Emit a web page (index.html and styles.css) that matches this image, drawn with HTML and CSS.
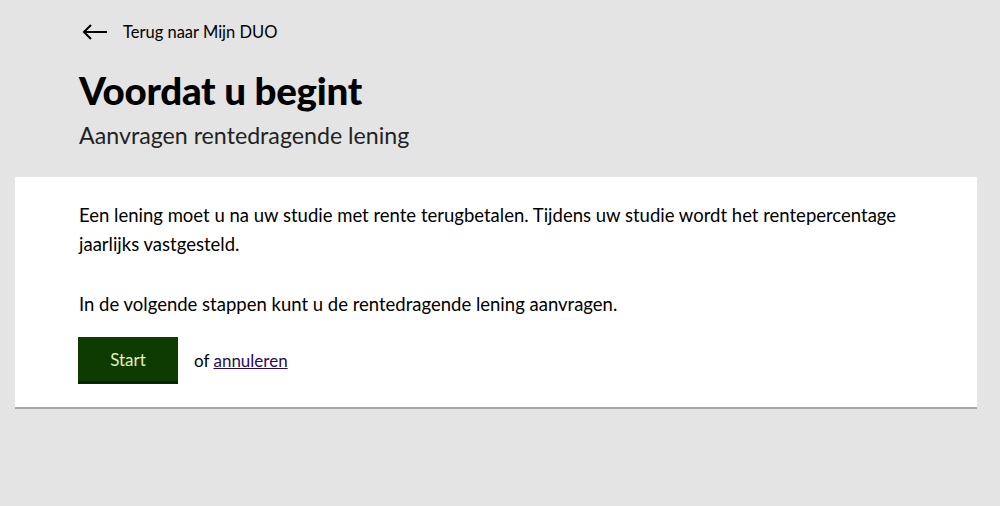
FILE: index.html
```html
<!DOCTYPE html>
<html lang="nl">
<head>
    <meta charset="UTF-8">
    <meta name="viewport" content="width=device-width, initial-scale=1.0">
    <title>Voordat u begint - Aanvragen rentedragende lening</title>
    <link rel="stylesheet" href="styles.css">
</head>
<body>
    <header class="top">
        <a class="back" href="#">
            <svg class="back-icon" width="26" height="16" viewBox="0 0 26 16" aria-hidden="true">
                <path d="M25 8H2M9 1L2 8l7 7" fill="none" stroke="#000" stroke-width="2"/>
            </svg>
            <span>Terug naar Mijn DUO</span>
        </a>
        <h1 class="title">Voordat u begint</h1>
        <p class="subtitle">Aanvragen rentedragende lening</p>
    </header>

    <main class="panel">
        <p>Een lening moet u na uw studie met rente terugbetalen. Tijdens uw studie wordt het rentepercentage jaarlijks vastgesteld.</p>
        <p>In de volgende stappen kunt u de rentedragende lening aanvragen.</p>
        <div class="actions">
            <button class="start" type="button">Start</button>
            <span class="cancel">of <a href="#">annuleren</a></span>
        </div>
    </main>
</body>
</html>
```

FILE: styles.css
```css
body {
    margin: 0;
    padding: 0;
    background-color: #e4e4e4;
    font-family: Lato, "Liberation Sans", sans-serif;
    color: #000;
}

.top {
    padding: 20px 0 0 79px;
}

.back {
    display: flex;
    align-items: center;
    gap: 15px;
    color: #000;
    text-decoration: none;
    font-size: 16.5px;
    padding-left: 3px;
    height: 24px;
}

.title {
    margin: 24px 0 0;
    font-size: 38.5px;
    font-weight: 900;
    line-height: 44px;
    letter-spacing: -0.3px;
}

.subtitle {
    margin: 8px 0 0;
    font-size: 23.2px;
    line-height: 30px;
    color: #222;
}

.panel {
    margin: 27px 23px 0 15px;
    padding: 24px 64px 23px 63px;
    background-color: #fff;
    border-bottom: 2px solid #a6a6a6;
}

.panel p {
    margin: 0 0 31px 1px;
    font-size: 18.5px;
    line-height: 29px;
}

.panel p + p {
    margin-bottom: 18px;
}

.actions {
    display: flex;
    align-items: center;
    gap: 16px;
}

.start {
    width: 100px;
    height: 47px;
    background-color: #0d3b00;
    color: #e6efb4;
    border: none;
    border-bottom: 3px solid #062600;
    font-family: inherit;
    font-size: 17px;
    cursor: pointer;
}

.cancel {
    font-size: 17px;
}

.cancel a {
    color: #2a0a5e;
}
```
